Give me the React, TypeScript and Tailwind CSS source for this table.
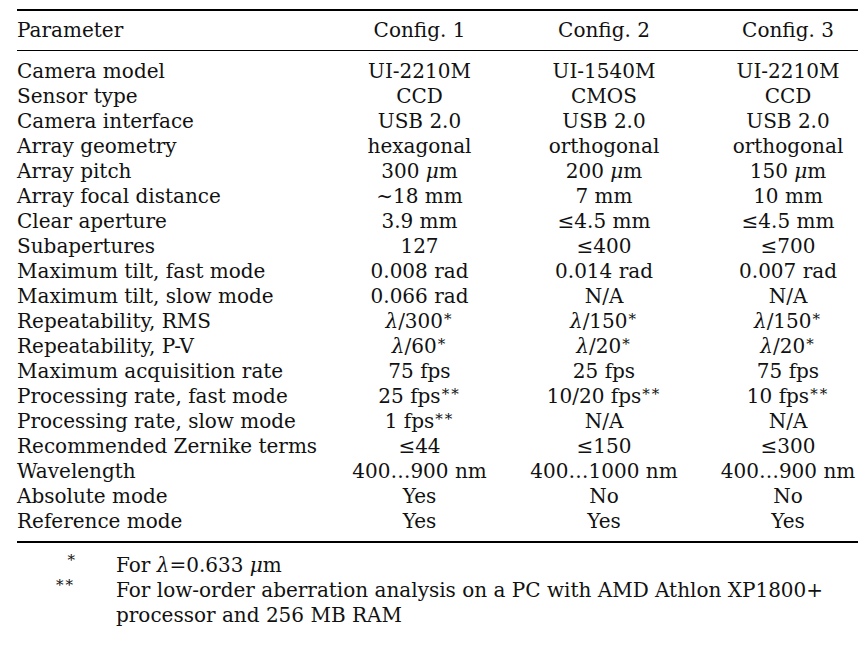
import React from 'react';

type Row = [string, React.ReactNode, React.ReactNode, React.ReactNode];

const LAM = '\u03bb';
const MU = '\u03bc';
const LEQ = '\u2264';
const SIM = '\u223c';
const DOTS = '\u2026';

const Lam = () => <span className="italic">{LAM}</span>;
const Mu = () => <span className="italic">{MU}</span>;
const Star = ({ n = 1 }: { n?: number }) => (
  <sup className="text-[15px] tracking-[2px] ml-[1px] top-[-0.3em]">{n === 2 ? '**' : '*'}</sup>
);

const rows: Row[] = [
  ['Camera model', 'UI-2210M', 'UI-1540M', 'UI-2210M'],
  ['Sensor type', 'CCD', 'CMOS', 'CCD'],
  ['Camera interface', 'USB 2.0', 'USB 2.0', 'USB 2.0'],
  ['Array geometry', 'hexagonal', 'orthogonal', 'orthogonal'],
  ['Array pitch', <>300 <Mu />m</>, <>200 <Mu />m</>, <>150 <Mu />m</>],
  ['Array focal distance', SIM + '18 mm', '7 mm', '10 mm'],
  ['Clear aperture', '3.9 mm', LEQ + '4.5 mm', LEQ + '4.5 mm'],
  ['Subapertures', '127', LEQ + '400', LEQ + '700'],
  ['Maximum tilt, fast mode', '0.008 rad', '0.014 rad', '0.007 rad'],
  ['Maximum tilt, slow mode', '0.066 rad', 'N/A', 'N/A'],
  ['Repeatability, RMS', <><Lam />/300<Star /></>, <><Lam />/150<Star /></>, <><Lam />/150<Star /></>],
  ['Repeatability, P-V', <><Lam />/60<Star /></>, <><Lam />/20<Star /></>, <><Lam />/20<Star /></>],
  ['Maximum acquisition rate', '75 fps', '25 fps', '75 fps'],
  ['Processing rate, fast mode', <>25 fps<Star n={2} /></>, <>10/20 fps<Star n={2} /></>, <>10 fps<Star n={2} /></>],
  ['Processing rate, slow mode', <>1 fps<Star n={2} /></>, 'N/A', 'N/A'],
  ['Recommended Zernike terms', LEQ + '44', LEQ + '150', LEQ + '300'],
  ['Wavelength', '400' + DOTS + '900 nm', '400' + DOTS + '1000 nm', '400' + DOTS + '900 nm'],
  ['Absolute mode', 'Yes', 'No', 'No'],
  ['Reference mode', 'Yes', 'Yes', 'Yes'],
];

const TableRow = ({ r }: { r: Row }) => (
  <div className="grid grid-cols-[313px_179px_190px_159px] h-[25px] leading-[25px] whitespace-nowrap">
    <div>{r[0]}</div>
    <div className="text-center">{r[1]}</div>
    <div className="text-center">{r[2]}</div>
    <div className="text-center pl-[19px]">{r[3]}</div>
  </div>
);

export default function App() {
  return (
    <div className="[font-family:DejaVu_Serif] w-[860px] h-[649px] bg-white text-[#111] text-[20px] overflow-hidden">
      <div className="font-['DejaVu_Serif'] ml-[17px] w-[841px] pt-[9px]">
        <div className="h-[2px] bg-black" />
        <div className="pt-[7px] pb-[7px]">
          <TableRow r={['Parameter', 'Config. 1', 'Config. 2', 'Config. 3']} />
        </div>
        <div className="h-[1px] bg-black" />
        <div className="pt-[8px] pb-[7px]">
          {rows.map((r) => (
            <TableRow key={r[0]} r={r} />
          ))}
        </div>
        <div className="h-[2px] bg-black" />

        <div className="mt-[10px] leading-[25px]">
          <div className="flex">
            <div className="w-[58px] text-right"><sup className="text-[15px]">*</sup></div>
            <div className="ml-[41px]">For <Lam />=0.633 <Mu />m</div>
          </div>
          <div className="flex">
            <div className="w-[58px] text-right"><sup className="text-[15px] tracking-[2px]">**</sup></div>
            <div className="ml-[41px]">
              For low-order aberration analysis on a PC with AMD Athlon XP1800+
              <br />
              processor and 256 MB RAM
            </div>
          </div>
        </div>
      </div>
    </div>
  );
}
